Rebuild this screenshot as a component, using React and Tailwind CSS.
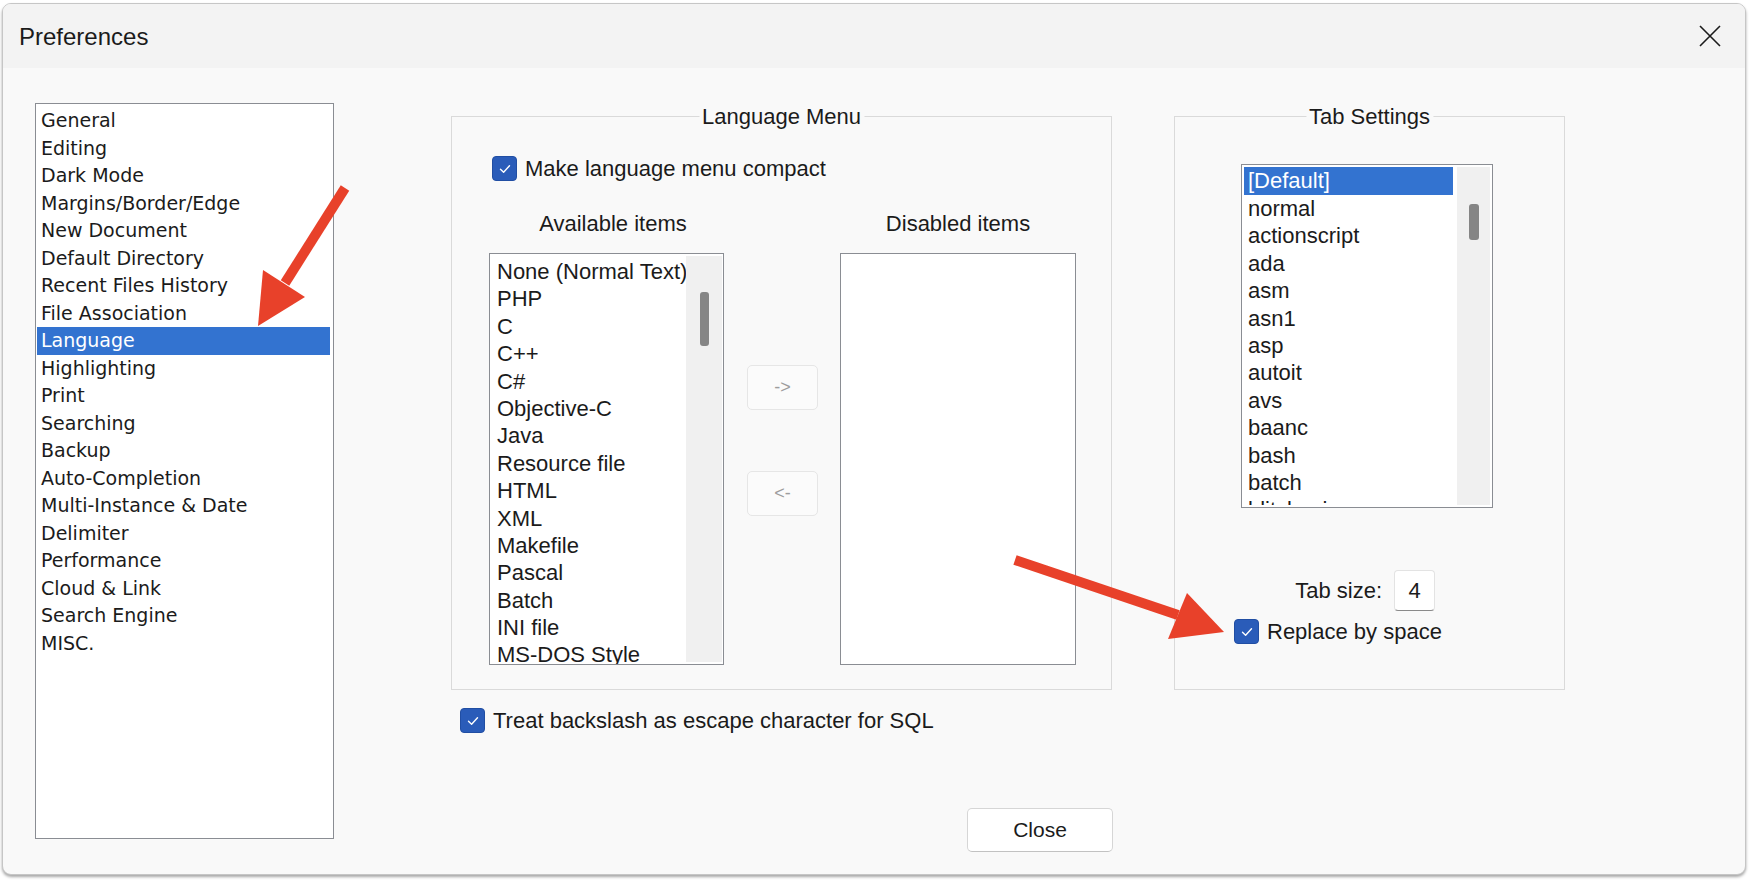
import React from "react";

const SECTIONS = [
  "General",
  "Editing",
  "Dark Mode",
  "Margins/Border/Edge",
  "New Document",
  "Default Directory",
  "Recent Files History",
  "File Association",
  "Language",
  "Highlighting",
  "Print",
  "Searching",
  "Backup",
  "Auto-Completion",
  "Multi-Instance & Date",
  "Delimiter",
  "Performance",
  "Cloud & Link",
  "Search Engine",
  "MISC.",
];

const LANGS = [
  "None (Normal Text)",
  "PHP",
  "C",
  "C++",
  "C#",
  "Objective-C",
  "Java",
  "Resource file",
  "HTML",
  "XML",
  "Makefile",
  "Pascal",
  "Batch",
  "INI file",
  "MS-DOS Style",
  "AutoIt",
];

const TAB_LANGS = [
  "[Default]",
  "normal",
  "actionscript",
  "ada",
  "asm",
  "asn1",
  "asp",
  "autoit",
  "avs",
  "baanc",
  "bash",
  "batch",
  "blitzbasic",
  "c",
];

const UI = { fontFamily: '"Liberation Sans", Arial, sans-serif' };
const LIST = { fontFamily: '"DejaVu Sans", Verdana, sans-serif' };

function Check({ label }) {
  return (
    <div className="flex items-center gap-[8px] h-[25px]">
      <div className="w-[25px] h-[25px] rounded-[4px] bg-[#2a5cb9] border border-[#214ea3] flex items-center justify-center">
        <svg width="14" height="14" viewBox="0 0 14 14" fill="none">
          <path d="M2.5 7.3 L5.6 10.2 L11.5 3.8" stroke="#fff" strokeWidth="1.4" strokeLinecap="round" strokeLinejoin="round" />
        </svg>
      </div>
      <span className="text-[22px] text-[#1b1b1b] whitespace-nowrap">{label}</span>
    </div>
  );
}

function GroupBox({ title, className, children }) {
  return (
    <div className={`relative border border-[#dadada] ${className}`}>
      <span className="absolute -top-[13px] left-1/2 -translate-x-1/2 px-[3px] bg-[#f9f9f9] text-[22px] leading-[26px] text-[#1b1b1b] whitespace-nowrap">
        {title}
      </span>
      {children}
    </div>
  );
}

function ScrollTrack({ width, pad, thumbH, thumbW }) {
  return (
    <div className={`${width} bg-[#f0f0f0] flex flex-col items-center ${pad}`}>
      <div className={`${thumbW} ${thumbH} rounded-[3px] bg-[#858585]`} />
    </div>
  );
}

function ArrowButton({ label }) {
  return (
    <div className="w-[71px] h-[45px] rounded-[5px] border border-[#e6e6e6] bg-[#fbfbfb] flex items-center justify-center text-[18px] text-[#9d9d9d]">
      {label}
    </div>
  );
}

export default function App() {
  return (
    <div className="relative w-[1750px] h-[880px] bg-white overflow-hidden pt-[3px] pl-[2px]" style={UI}>
      <div className="w-[1744px] h-[872px] rounded-[9px] border border-[#c6c6c6] bg-[#f9f9f9] overflow-hidden shadow-[0_2px_3px_rgba(0,0,0,0.35)] flex flex-col">
        {/* Title bar */}
        <div className="h-[64px] bg-[#f3f3f3] flex items-center justify-between pl-[16px] pr-[24px]">
          <span className="text-[24px] text-[#1b1b1b] pt-[2px]">Preferences</span>
          <svg width="22" height="22" viewBox="0 0 22 22">
            <path d="M1 1 L21 21 M21 1 L1 21" stroke="#1b1b1b" strokeWidth="1.6" />
          </svg>
        </div>

        {/* Body */}
        <div className="flex items-start pl-[32px] pt-[35px]">
          {/* Section list */}
          <div className="w-[299px] h-[736px] border border-[#8a8d93] bg-white pl-[1px] pr-[3px] pt-[3px]" style={LIST}>
            {SECTIONS.map((s) => (
              <div
                key={s}
                className={`h-[27.5px] leading-[27.5px] pl-[4px] text-[19px] whitespace-nowrap ${
                  s === "Language" ? "bg-[#3373d0] text-white" : "text-[#1b1b1b]"
                }`}
              >
                {s}
              </div>
            ))}
          </div>

          {/* Right side */}
          <div className="ml-[117px] mt-[13px] flex flex-col">
            <div className="flex gap-[62px]">
              <GroupBox title="Language Menu" className="w-[661px] h-[574px] pl-[37px] pt-[39px]">
                <div className="ml-[3px]">
                  <Check label="Make language menu compact" />
                </div>
                <div className="flex items-start mt-[30px]">
                  <div className="flex flex-col w-[235px]">
                    <div className="h-[26px] leading-[26px] text-center pl-[13px] text-[22px] text-[#1b1b1b]">Available items</div>
                    <div className="mt-[16px] h-[412px] border border-[#8a8d93] bg-white flex overflow-hidden">
                      <div className="flex-1 overflow-hidden pt-[4px] pl-[7px]">
                        {LANGS.map((l) => (
                          <div key={l} className="h-[27.4px] leading-[27.4px] text-[22px] text-[#1b1b1b] whitespace-nowrap">
                            {l}
                          </div>
                        ))}
                      </div>
                      <div className="my-[2px] mr-[1px] flex">
                        <ScrollTrack width="w-[36px]" pad="pt-[36px]" thumbW="w-[9px]" thumbH="h-[54px]" />
                      </div>
                    </div>
                  </div>
                  <div className="ml-[23px] flex flex-col pt-[154px] gap-[61px]">
                    <ArrowButton label="->" />
                    <ArrowButton label="<-" />
                  </div>
                  <div className="ml-[22px] flex flex-col w-[236px]">
                    <div className="h-[26px] leading-[26px] text-center text-[22px] text-[#1b1b1b]">Disabled items</div>
                    <div className="mt-[16px] h-[412px] border border-[#8a8d93] bg-white" />
                  </div>
                </div>
              </GroupBox>

              <GroupBox title="Tab Settings" className="w-[391px] h-[574px] pt-[47px]">
                <div className="ml-[66px] w-[252px] h-[344px] border border-[#8a8d93] bg-white flex p-[2px] overflow-hidden">
                  <div className="flex-1 overflow-hidden">
                    {TAB_LANGS.map((l) => (
                      <div
                        key={l}
                        className={`pl-[4px] text-[22px] whitespace-nowrap ${
                          l === "[Default]"
                            ? "h-[28px] leading-[28px] bg-[#3373d0] text-white"
                            : "h-[27.4px] leading-[27.4px] text-[#1b1b1b]"
                        }`}
                      >
                        {l}
                      </div>
                    ))}
                  </div>
                  <div className="ml-[4px] flex">
                    <ScrollTrack width="w-[33px]" pad="pt-[37px]" thumbW="w-[10px]" thumbH="h-[36px]" />
                  </div>
                </div>
                <div className="mt-[62px] w-[260px] flex justify-end items-center gap-[12px]">
                  <span className="text-[22px] text-[#1b1b1b]">Tab size:</span>
                  <div className="w-[41px] h-[41px] rounded-[4px] bg-white border border-[#e3e3e3] border-b-[#8a8a8a] flex items-center justify-center text-[22px] text-[#1b1b1b]">
                    4
                  </div>
                </div>
                <div className="mt-[8px] ml-[59px]">
                  <Check label="Replace by space" />
                </div>
              </GroupBox>
            </div>

            <div className="mt-[18px] ml-[9px]">
              <Check label="Treat backslash as escape character for SQL" />
            </div>

            <div className="mt-[75px] ml-[516px] w-[146px] h-[44px] rounded-[5px] bg-white border border-[#d6d6d6] border-b-[#c2c2c2] flex items-center justify-center text-[21px] text-[#1b1b1b]">
              Close
            </div>
          </div>
        </div>
      </div>

      {/* Red annotation arrows */}
      <svg className="absolute left-0 top-0 pointer-events-none" width="1750" height="880" viewBox="0 0 1750 880">
        <line x1="345" y1="188" x2="285" y2="283" stroke="#e8412a" strokeWidth="10" />
        <polygon points="263,270 305,297 258,326" fill="#e8412a" />
        <line x1="1015" y1="560" x2="1178" y2="615" stroke="#e8412a" strokeWidth="10" />
        <polygon points="1187,593 1168,639 1224,632" fill="#e8412a" />
      </svg>
    </div>
  );
}
